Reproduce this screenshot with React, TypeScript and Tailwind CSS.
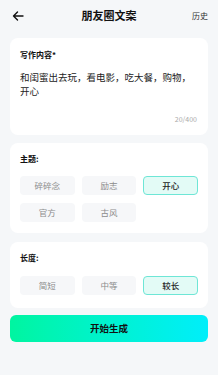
const themes = ["碎碎念", "励志", "开心", "官方", "古风"];
const lengths = ["简短", "中等", "较长"];

function Chip({ label, active }: { label: string; active?: boolean }) {
  return (
    <div
      className={
        active
          ? "flex h-[19px] items-center justify-center rounded-[4px] border border-[#6ee6d6] bg-[#e3fbf6] text-[8.5px] font-medium text-[#222]"
          : "flex h-[19px] items-center justify-center rounded-[4px] border border-transparent bg-[#f6f7f9] text-[8.5px] text-[#8c8c8c]"
      }
    >
      {label}
    </div>
  );
}

export default function App() {
  return (
    <main
      className="h-[375px] w-[218px] overflow-hidden bg-[#f5f7f9] px-[10px]"
      style={{ fontFamily: '"Noto Sans CJK SC", "Noto Sans", sans-serif' }}
    >
      <header className="grid h-[30px] grid-cols-[1fr_auto_1fr] items-center pt-[1px]">
        <svg width="12" height="10" viewBox="0 0 12 10" className="ml-[2px]">
          <path d="M11 5H1.5M5.5 1 1.5 5l4 4" fill="none" stroke="#111" strokeWidth="1.4" strokeLinecap="round" strokeLinejoin="round" />
        </svg>
        <h1 className="text-[11px] font-semibold text-[#111]">朋友圈文案</h1>
        <span className="justify-self-end text-[8px] text-[#333]">历史</span>
      </header>

      <section className="mt-[8px] h-[97px] rounded-[8px] bg-white px-[10px] pt-[11px]">
        <div className="text-[8px] font-bold leading-[12px] text-[#111]">写作内容*</div>
        <p className="mt-[9px] text-[9.5px] leading-[14px] text-[#222]">和闺蜜出去玩，看电影，吃大餐，购物，开心</p>
        <div className="mt-[16px] pr-[1px] text-right text-[7px] text-[#aaa]">20/400</div>
      </section>

      <section className="mt-[8px] rounded-[8px] bg-white px-[10px] pb-[11px] pt-[10px]">
        <div className="text-[8px] font-bold leading-[12px] text-[#111]">主题:</div>
        <div className="mt-[11px] grid grid-cols-3 gap-x-[7px] gap-y-[8px]">
          {themes.map((t) => (
            <Chip key={t} label={t} active={t === "开心"} />
          ))}
        </div>
      </section>

      <section className="mt-[9px] rounded-[8px] bg-white px-[10px] pb-[13px] pt-[10px]">
        <div className="text-[8px] font-bold leading-[12px] text-[#111]">长度:</div>
        <div className="mt-[12px] grid grid-cols-3 gap-x-[7px]">
          {lengths.map((t) => (
            <Chip key={t} label={t} active={t === "较长"} />
          ))}
        </div>
      </section>

      <button className="mt-[7px] flex h-[27px] w-full items-center justify-center rounded-[6px] bg-gradient-to-r from-[#00f5a0] to-[#00eefa] text-[9.5px] font-semibold text-[#111]">
        开始生成
      </button>
    </main>
  );
}
